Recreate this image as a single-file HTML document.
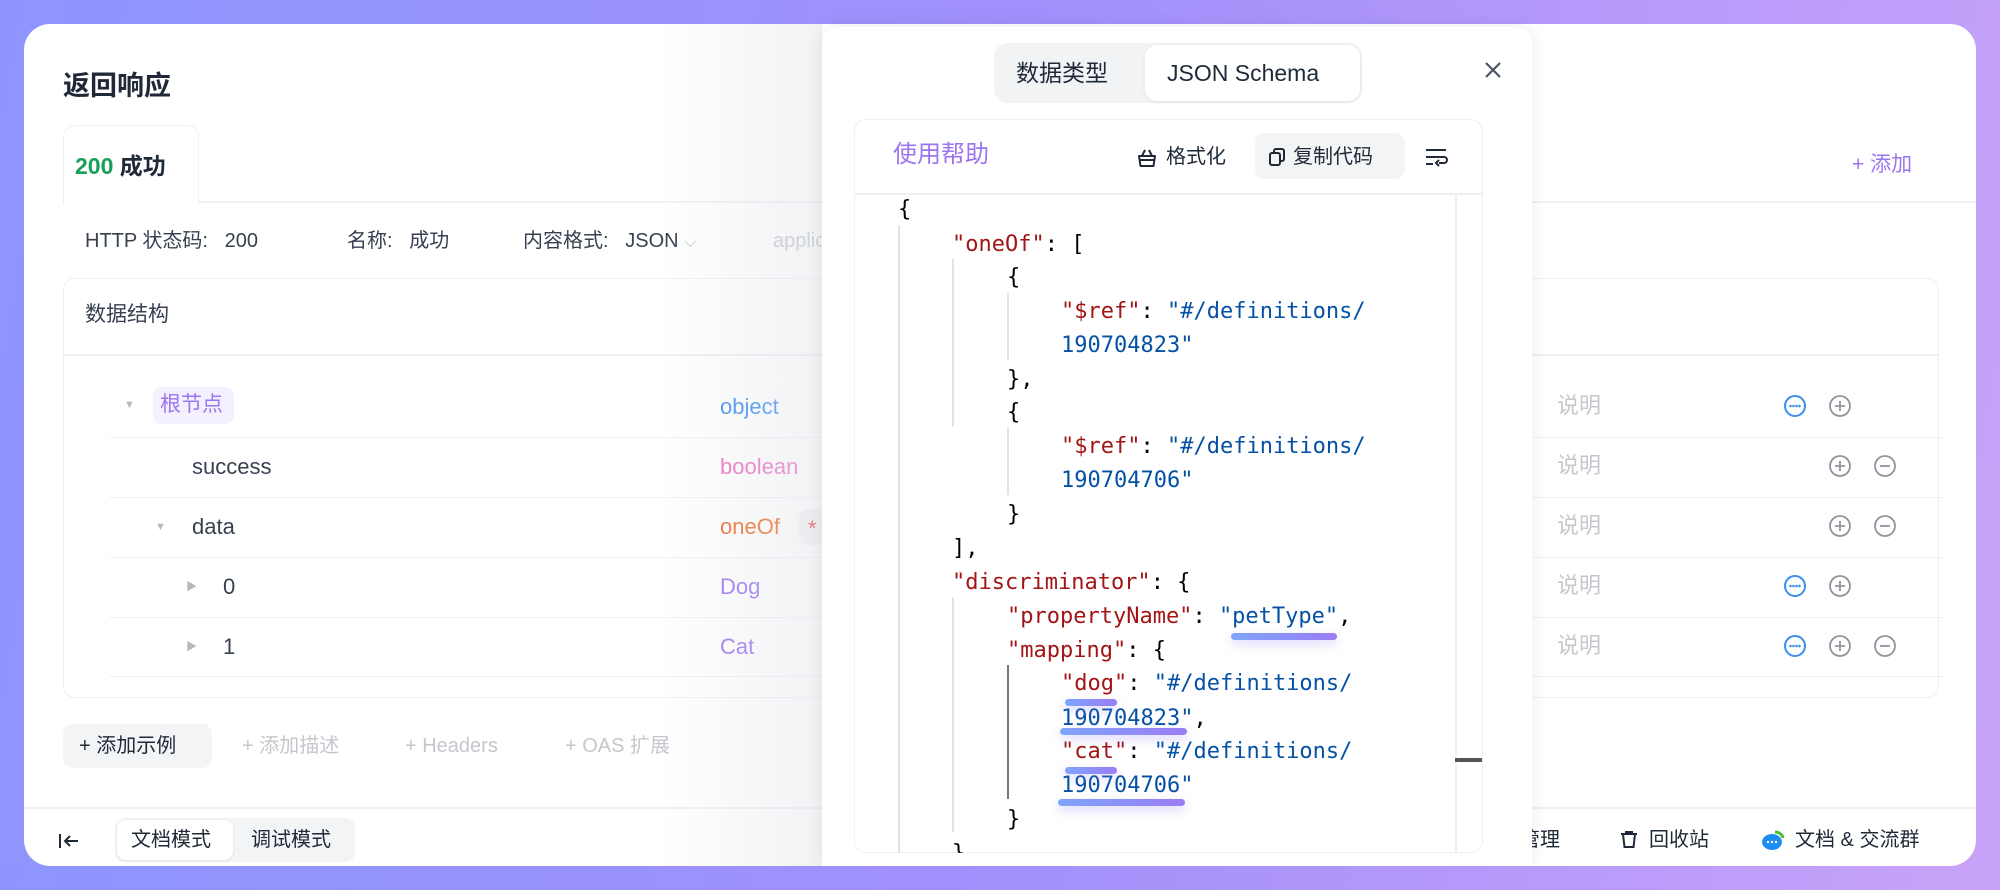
<!DOCTYPE html>
<html><head><meta charset="utf-8"><style>
*{margin:0;padding:0;box-sizing:border-box}
body{width:2000px;height:890px;overflow:hidden;background:linear-gradient(100deg,#8d95fd 0%,#a290fb 50%,#c9a3f9 100%);font-family:"Liberation Sans","Noto Sans CJK SC",sans-serif;color:#1f2937;position:relative}
.a{position:absolute;white-space:nowrap;line-height:30px}
#card{position:absolute;left:24px;top:24px;width:1952px;height:842px;background:#fff;border-radius:26px;overflow:hidden}
.t20{font-size:20px}
.row{position:absolute;left:85px;width:1835px;height:1px;background:#f0f1f3}
.ic{position:absolute;width:24px;height:24px}
.code{font-family:"DejaVu Sans Mono","Liberation Mono",monospace;font-size:22px;position:absolute;white-space:pre;line-height:34px;color:#000}
.k{color:#a31515}.s{color:#0451a5}
.ul{position:absolute;height:7px;border-radius:4px;background:linear-gradient(90deg,#7ea5fb,#9b7cf5);box-shadow:0 4px 10px rgba(140,130,240,.35)}
.g{position:absolute;width:2px;background:#e3e3e3}
</style></head><body>
<div id="card">
  <div class="a" style="left:39px;top:47px;font-size:27px;font-weight:bold;color:#1f2937">返回响应</div>
  <div class="a" style="left:39px;top:101px;width:136px;height:80px;border:1px solid #eef0f3;border-bottom:none;border-radius:12px 12px 0 0;background:#fff"></div>
  <div class="a" style="left:51px;top:127px;font-size:23px;font-weight:bold"><span style="color:#18a058">200</span> 成功</div>
  <div class="a" style="left:175px;top:177px;width:1777px;height:2px;background:#f0f1f4"></div>
  <div class="a" style="left:1828px;top:126px;font-size:21px;color:#9b74f2">+ 添加</div>

  <div class="a t20" style="left:61px;top:202px;color:#374151">HTTP 状态码:&nbsp;&nbsp; 200</div>
  <div class="a t20" style="left:323px;top:202px;color:#374151">名称:&nbsp;&nbsp; 成功</div>
  <div class="a t20" style="left:499px;top:202px;color:#374151">内容格式:&nbsp;&nbsp; JSON <span style="color:#bbb;font-size:16px">⌵</span></div>
  <div class="a t20" style="left:749px;top:202px;color:#c4c7cc">application/json</div>

  <div class="a" style="left:39px;top:254px;width:1876px;height:420px;border:1.5px solid #eef0f3;border-radius:12px"></div>
  <div class="a t20" style="left:61px;top:276px;font-size:21px;color:#374151">数据结构</div>
  <div class="a" style="left:40px;top:330px;width:1874px;height:1.5px;background:#eef0f3"></div>

  <div class="row" style="top:413px"></div><div class="row" style="top:473px"></div><div class="row" style="top:533px"></div><div class="row" style="top:593px"></div><div class="row" style="top:652px"></div>

  <div class="a" style="left:100px;top:366px;font-size:11px;color:#b4b8bf">▼</div>
  <div class="a" style="left:129px;top:363px;width:81px;height:37px;border-radius:8px;background:#f4f0fe"></div>
  <div class="a" style="left:136px;top:366px;font-size:21px;color:#9b74f2">根节点</div>
  <div class="a" style="left:168px;top:428px;font-size:22px;color:#374151">success</div>
  <div class="a" style="left:131px;top:488px;font-size:11px;color:#b4b8bf">▼</div>
  <div class="a" style="left:168px;top:488px;font-size:22px;color:#374151">data</div>
  <div class="a" style="left:162px;top:548px;font-size:11px;color:#b4b8bf">▶</div>
  <div class="a" style="left:199px;top:548px;font-size:22px;color:#374151">0</div>
  <div class="a" style="left:162px;top:608px;font-size:11px;color:#b4b8bf">▶</div>
  <div class="a" style="left:199px;top:608px;font-size:22px;color:#374151">1</div>

  <div class="a" style="left:696px;top:368px;font-size:22px;color:#3a8ef0">object</div>
  <div class="a" style="left:696px;top:428px;font-size:22px;color:#ec6fc3">boolean</div>
  <div class="a" style="left:696px;top:488px;font-size:22px;color:#f06a24">oneOf</div>
  <div class="a" style="left:775px;top:485px;width:30px;height:36px;border-radius:8px;background:#f3f4f6"></div>
  <div class="a" style="left:784px;top:490px;font-size:22px;color:#e53935">*</div>
  <div class="a" style="left:696px;top:548px;font-size:22px;color:#9b74f2">Dog</div>
  <div class="a" style="left:696px;top:608px;font-size:22px;color:#9b74f2">Cat</div>

  <div class="a" style="left:1533px;top:367px;font-size:22px;color:#c4c7cc">说明</div>
  <div class="a" style="left:1533px;top:427px;font-size:22px;color:#c4c7cc">说明</div>
  <div class="a" style="left:1533px;top:487px;font-size:22px;color:#c4c7cc">说明</div>
  <div class="a" style="left:1533px;top:547px;font-size:22px;color:#c4c7cc">说明</div>
  <div class="a" style="left:1533px;top:607px;font-size:22px;color:#c4c7cc">说明</div>

  <svg class="ic" style="left:1759px;top:370px" viewBox="0 0 24 24"><circle cx="12" cy="12" r="10" fill="none" stroke="#3a8ef0" stroke-width="2"/><circle cx="7.5" cy="12" r="1.3" fill="#3a8ef0"/><circle cx="10.5" cy="12" r="1.3" fill="#3a8ef0"/><circle cx="13.5" cy="12" r="1.3" fill="#3a8ef0"/><circle cx="16.5" cy="12" r="1.3" fill="#3a8ef0"/></svg>
  <svg class="ic" style="left:1759px;top:550px" viewBox="0 0 24 24"><circle cx="12" cy="12" r="10" fill="none" stroke="#3a8ef0" stroke-width="2"/><circle cx="7.5" cy="12" r="1.3" fill="#3a8ef0"/><circle cx="10.5" cy="12" r="1.3" fill="#3a8ef0"/><circle cx="13.5" cy="12" r="1.3" fill="#3a8ef0"/><circle cx="16.5" cy="12" r="1.3" fill="#3a8ef0"/></svg>
  <svg class="ic" style="left:1759px;top:610px" viewBox="0 0 24 24"><circle cx="12" cy="12" r="10" fill="none" stroke="#3a8ef0" stroke-width="2"/><circle cx="7.5" cy="12" r="1.3" fill="#3a8ef0"/><circle cx="10.5" cy="12" r="1.3" fill="#3a8ef0"/><circle cx="13.5" cy="12" r="1.3" fill="#3a8ef0"/><circle cx="16.5" cy="12" r="1.3" fill="#3a8ef0"/></svg>
  <svg class="ic" style="left:1804px;top:370px" viewBox="0 0 24 24"><circle cx="12" cy="12" r="10" fill="none" stroke="#8f949c" stroke-width="1.8"/><path d="M12 7v10M7 12h10" stroke="#8f949c" stroke-width="1.8"/></svg>
  <svg class="ic" style="left:1804px;top:430px" viewBox="0 0 24 24"><circle cx="12" cy="12" r="10" fill="none" stroke="#8f949c" stroke-width="1.8"/><path d="M12 7v10M7 12h10" stroke="#8f949c" stroke-width="1.8"/></svg>
  <svg class="ic" style="left:1804px;top:490px" viewBox="0 0 24 24"><circle cx="12" cy="12" r="10" fill="none" stroke="#8f949c" stroke-width="1.8"/><path d="M12 7v10M7 12h10" stroke="#8f949c" stroke-width="1.8"/></svg>
  <svg class="ic" style="left:1804px;top:550px" viewBox="0 0 24 24"><circle cx="12" cy="12" r="10" fill="none" stroke="#8f949c" stroke-width="1.8"/><path d="M12 7v10M7 12h10" stroke="#8f949c" stroke-width="1.8"/></svg>
  <svg class="ic" style="left:1804px;top:610px" viewBox="0 0 24 24"><circle cx="12" cy="12" r="10" fill="none" stroke="#8f949c" stroke-width="1.8"/><path d="M12 7v10M7 12h10" stroke="#8f949c" stroke-width="1.8"/></svg>
  <svg class="ic" style="left:1849px;top:430px" viewBox="0 0 24 24"><circle cx="12" cy="12" r="10" fill="none" stroke="#8f949c" stroke-width="1.8"/><path d="M7 12h10" stroke="#8f949c" stroke-width="1.8"/></svg>
  <svg class="ic" style="left:1849px;top:490px" viewBox="0 0 24 24"><circle cx="12" cy="12" r="10" fill="none" stroke="#8f949c" stroke-width="1.8"/><path d="M7 12h10" stroke="#8f949c" stroke-width="1.8"/></svg>
  <svg class="ic" style="left:1849px;top:610px" viewBox="0 0 24 24"><circle cx="12" cy="12" r="10" fill="none" stroke="#8f949c" stroke-width="1.8"/><path d="M7 12h10" stroke="#8f949c" stroke-width="1.8"/></svg>

  <div class="a" style="left:39px;top:700px;width:149px;height:44px;border-radius:10px;background:#f3f4f6"></div>
  <div class="a t20" style="left:55px;top:707px;color:#1f2937">+ 添加示例</div>
  <div class="a t20" style="left:218px;top:707px;color:#c4c7cc">+ 添加描述</div>
  <div class="a t20" style="left:381px;top:707px;color:#c4c7cc">+ Headers</div>
  <div class="a t20" style="left:541px;top:707px;color:#c4c7cc">+ OAS 扩展</div>

  <div class="a" style="left:0;top:783px;width:1952px;height:1.5px;background:#eef0f3"></div>
  <svg class="a" style="left:33px;top:805px" width="24" height="24" viewBox="0 0 24 24"><path d="M3 5v14M21 12H8M13 7l-5 5 5 5" fill="none" stroke="#1f2937" stroke-width="2"/></svg>
  <div class="a" style="left:91px;top:794px;width:240px;height:44px;border-radius:10px;background:#f3f4f6"></div>
  <div class="a" style="left:93px;top:796px;width:116px;height:40px;border-radius:9px;background:#fff;box-shadow:0 1px 3px rgba(0,0,0,.08)"></div>
  <div class="a t20" style="left:107px;top:801px;color:#1f2937">文档模式</div>
  <div class="a t20" style="left:227px;top:801px;color:#1f2937">调试模式</div>

  <div class="a t20" style="left:1496px;top:801px;color:#1f2937">管理</div>
  <svg class="a" style="left:1594px;top:805px" width="22" height="22" viewBox="0 0 22 22"><path d="M3 5h16M5 5l1.5 13h9L17 5M8 5V3h6v2" fill="none" stroke="#1f2937" stroke-width="2"/></svg>
  <div class="a t20" style="left:1625px;top:801px;color:#1f2937">回收站</div>
  <svg class="a" style="left:1737px;top:804px" width="26" height="24" viewBox="0 0 26 24"><path d="M14 4a8 7 0 0 1 8 6" fill="none" stroke="#4cc12f" stroke-width="3"/><ellipse cx="11" cy="14" rx="10" ry="8" fill="#1e8cf0"/><circle cx="7" cy="14" r="1.2" fill="#fff"/><circle cx="11" cy="14" r="1.2" fill="#fff"/><circle cx="15" cy="14" r="1.2" fill="#fff"/></svg>
  <div class="a t20" style="left:1771px;top:801px;color:#1f2937">文档 &amp; 交流群</div>
</div>

<div class="a" style="left:660px;top:24px;width:162px;height:842px;background:linear-gradient(90deg,rgba(230,232,236,0),rgba(225,227,232,.45))"></div>
<div class="a" style="left:822px;top:27px;width:710px;height:839px;background:#fff;border-radius:16px 16px 0 0;box-shadow:0 0 18px rgba(0,0,0,.08)">
  <div class="a" style="left:172px;top:16px;width:368px;height:60px;border-radius:14px;background:#f2f3f5"></div>
  <div class="a" style="left:323px;top:18px;width:215px;height:56px;border-radius:12px;background:#fff;box-shadow:0 1px 4px rgba(0,0,0,.08)"></div>
  <div class="a" style="left:194px;top:31px;font-size:23px;color:#1f2937">数据类型</div>
  <div class="a" style="left:345px;top:31px;font-size:23px;color:#1f2937">JSON Schema</div>
  <svg class="a" style="left:659px;top:31px" width="24" height="24" viewBox="0 0 24 24"><path d="M5 5l14 14M19 5L5 19" stroke="#4b5563" stroke-width="2.2"/></svg>

  <div class="a" style="left:32px;top:92px;width:629px;height:734px;border:1.5px solid #eef0f3;border-radius:12px;overflow:hidden">
    <div class="a" style="left:38px;top:20px;font-size:24px;color:#9b74f2">使用帮助</div>
    <svg class="a" style="left:281px;top:28px" width="22" height="20" viewBox="0 0 22 20"><path d="M3 8h16l-1.5 10h-13zM6 8l3-6M16 8l-3-6M3 12h16" fill="none" stroke="#1f2937" stroke-width="2" stroke-linejoin="round"/></svg>
    <div class="a t20" style="left:311px;top:22px;color:#1f2937">格式化</div>
    <div class="a" style="left:400px;top:13px;width:150px;height:46px;border-radius:10px;background:#f3f4f6"></div>
    <svg class="a" style="left:412px;top:27px" width="20" height="20" viewBox="0 0 20 20"><rect x="3" y="6" width="10" height="12" rx="2" fill="none" stroke="#1f2937" stroke-width="2"/><path d="M7 6V4a2 2 0 0 1 2-2h6a2 2 0 0 1 2 2v8a2 2 0 0 1-2 2h-2" fill="none" stroke="#1f2937" stroke-width="2"/></svg>
    <div class="a t20" style="left:438px;top:22px;color:#1f2937">复制代码</div>
    <svg class="a" style="left:569px;top:26px" width="24" height="22" viewBox="0 0 24 22"><path d="M2 4h20M2 11h18a3 3 0 0 1 0 6h-5M15 14l-3 3 3 3M2 18h7" fill="none" stroke="#1f2937" stroke-width="2"/></svg>
    <div class="a" style="left:0;top:73px;width:629px;height:1.5px;background:#eef0f3"></div>
    <div class="a" style="left:600px;top:74px;width:1.5px;height:660px;background:#eef0f3"></div>
    <div class="a" style="left:600px;top:638px;width:28px;height:4px;background:#555"></div>
  </div>

  <div class="g" style="left:76px;top:198px;height:628px"></div>
  <div class="g" style="left:130px;top:232px;height:168px"></div>
  <div class="g" style="left:185px;top:266px;height:67px"></div>
  <div class="g" style="left:185px;top:401px;height:67px"></div>
  <div class="g" style="left:130px;top:570px;height:235px"></div>
  <div class="g" style="left:185px;top:638px;height:134px;background:#777"></div>

  <div class="code" style="left:76px;top:166px">{</div>
  <div class="code" style="left:130px;top:201px"><span class="k">"oneOf"</span>: [</div>
  <div class="code" style="left:185px;top:234px">{</div>
  <div class="code" style="left:239px;top:268px"><span class="k">"$ref"</span>: <span class="s">"#/definitions/</span></div>
  <div class="code" style="left:239px;top:302px"><span class="s">190704823"</span></div>
  <div class="code" style="left:185px;top:336px">},</div>
  <div class="code" style="left:185px;top:369px">{</div>
  <div class="code" style="left:239px;top:403px"><span class="k">"$ref"</span>: <span class="s">"#/definitions/</span></div>
  <div class="code" style="left:239px;top:437px"><span class="s">190704706"</span></div>
  <div class="code" style="left:185px;top:471px">}</div>
  <div class="code" style="left:130px;top:505px">],</div>
  <div class="code" style="left:130px;top:539px"><span class="k">"discriminator"</span>: {</div>
  <div class="code" style="left:185px;top:573px"><span class="k">"propertyName"</span>: <span class="s">"petType"</span>,</div>
  <div class="code" style="left:185px;top:607px"><span class="k">"mapping"</span>: {</div>
  <div class="code" style="left:239px;top:640px"><span class="k">"dog"</span>: <span class="s">"#/definitions/</span></div>
  <div class="code" style="left:239px;top:675px"><span class="s">190704823"</span>,</div>
  <div class="code" style="left:239px;top:708px"><span class="k">"cat"</span>: <span class="s">"#/definitions/</span></div>
  <div class="code" style="left:239px;top:742px"><span class="s">190704706"</span></div>
  <div class="code" style="left:185px;top:776px">}</div>
  <div class="code" style="left:130px;top:810px;height:16px;overflow:hidden">}</div>

  <div class="ul" style="left:409px;top:606px;width:106px"></div>
  <div class="ul" style="left:243px;top:672px;width:52px"></div>
  <div class="ul" style="left:238px;top:701px;width:127px"></div>
  <div class="ul" style="left:243px;top:740px;width:52px"></div>
  <div class="ul" style="left:236px;top:772px;width:127px"></div>
</div>
<div class="a" style="left:0;top:866px;width:2000px;height:24px;background:linear-gradient(100deg,#8d95fd 0%,#a290fb 50%,#c9a3f9 100%)"></div>
</body></html>
